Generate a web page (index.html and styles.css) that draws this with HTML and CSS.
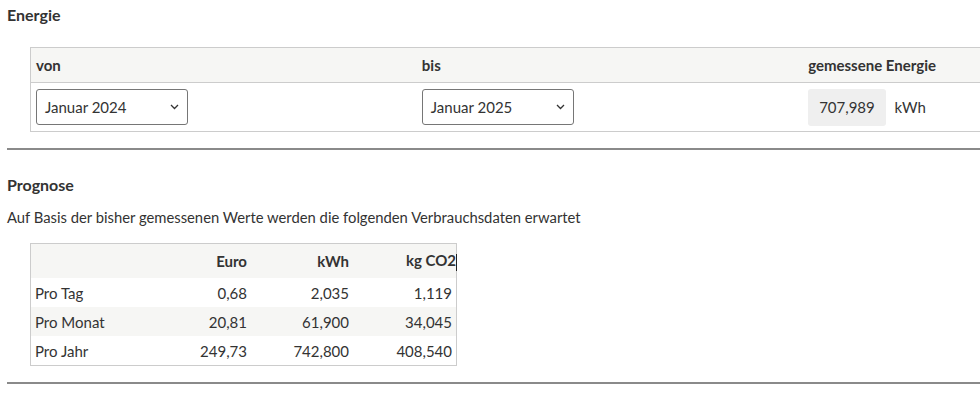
FILE: index.html
```html
<!DOCTYPE html>
<html>
<head>
  <title>Energie</title>
  <meta charset="utf-8">
  <link rel="stylesheet" href="styles.css">
</head>
<body>
<div class="section">
  <h3>Energie</h3>
  <div class="energy-wrap">
    <table class="energy">
      <tr>
        <th>von</th>
        <th>bis</th>
        <th>gemessene Energie</th>
      </tr>
      <tr>
        <td>
          <div class="select">Januar 2024
            <svg class="chev" width="9" height="6" viewBox="0 0 9 6"><path d="M1 1 L4.5 4.5 L8 1" fill="none" stroke="#333" stroke-width="1.3"/></svg>
          </div>
        </td>
        <td>
          <div class="select">Januar 2025
            <svg class="chev" width="9" height="6" viewBox="0 0 9 6"><path d="M1 1 L4.5 4.5 L8 1" fill="none" stroke="#333" stroke-width="1.3"/></svg>
          </div>
        </td>
        <td>
          <span class="readonly">707,989</span>
          <span class="unit">kWh</span>
        </td>
      </tr>
    </table>
  </div>
</div>
<hr>
<div class="section">
  <h3 class="second">Prognose</h3>
  <p class="intro">Auf Basis der bisher gemessenen Werte werden die folgenden Verbrauchsdaten erwartet</p>
  <table class="forecast">
    <tr>
      <th></th>
      <th>Euro</th>
      <th>kWh</th>
      <th>kg CO2<span class="caret"></span></th>
    </tr>
    <tr>
      <td>Pro Tag</td>
      <td>0,68</td>
      <td>2,035</td>
      <td>1,119</td>
    </tr>
    <tr>
      <td>Pro Monat</td>
      <td>20,81</td>
      <td>61,900</td>
      <td>34,045</td>
    </tr>
    <tr>
      <td>Pro Jahr</td>
      <td>249,73</td>
      <td>742,800</td>
      <td>408,540</td>
    </tr>
  </table>
</div>
<hr>
</body>
</html>
```

FILE: styles.css
```css
body {
  font-family: Lato, 'Open Sans', Arial, sans-serif;
  font-size: 15px;
  color: #333;
  margin: 0;
  padding: 0 0 0 7px;
  overflow: hidden;
}
h3 {
  font-size: 16px;
  font-weight: bold;
  margin: 6px 0 0 0;
  line-height: 18px;
}
h3.second {
  margin-top: 26px;
}
.energy-wrap {
  margin: 23px 0 0 23px;
  overflow: hidden;
  padding-bottom: 16px;
}
table {
  border-collapse: collapse;
}
.energy {
  width: 1160px;
  table-layout: fixed;
  border: 1px solid #ccc;
}
.energy th {
  background: #f6f6f4;
  text-align: left;
  padding: 0 5px;
  height: 34px;
  border-bottom: 1px solid #ccc;
}
.energy td {
  padding: 0 5px;
  height: 48px;
}
.select {
  height: 34px;
  border: 1px solid #767676;
  border-radius: 3px;
  display: flex;
  align-items: center;
  justify-content: space-between;
  padding: 0 8px 0 8px;
  width: 134px;
}
.chev {
  display: block;
}
.readonly {
  display: inline-block;
  background: #efefef;
  border-radius: 3px;
  padding: 0 11px 0 11px;
  line-height: 37px;
}
.unit {
  margin-left: 5px;
}
hr {
  border: none;
  border-top: 2px solid #8a8a8a;
  margin: 0;
}
.intro {
  margin: 14px 0 0 0;
  line-height: 18px;
  font-size: 14.8px;
}
.forecast {
  margin: 17px 0 16px 23px;
  border: 1px solid #ccc;
}
.forecast th {
  font-weight: bold;
  text-align: right;
  height: 34px;
  padding: 0 4px;
}
.forecast th:first-child {
  width: 112px;
}
.forecast th:nth-child(2) {
  width: 92px;
}
.forecast th:nth-child(3) {
  width: 94px;
}
.forecast th:nth-child(4) {
  width: 95px;
}
.forecast td {
  text-align: right;
  height: 29px;
  padding: 0 4px;
}
.forecast td:first-child {
  text-align: left;
}
.forecast tr:nth-child(odd) {
  background: #f6f6f4;
}
.caret {
  display: inline-block;
  width: 1px;
  height: 17px;
  background: #222;
  vertical-align: middle;
  margin-right: -5px;
}
```
